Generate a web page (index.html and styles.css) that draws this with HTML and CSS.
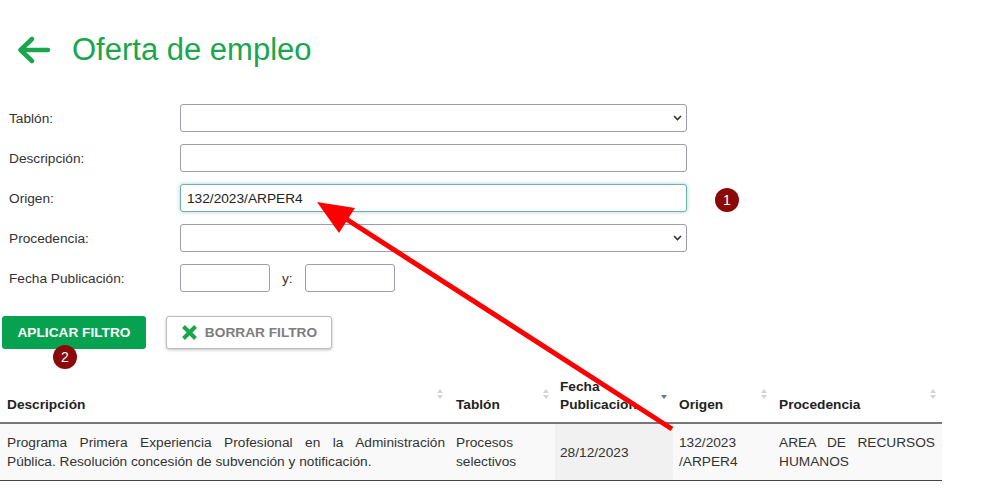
FILE: index.html
```html
<!DOCTYPE html>
<html lang="es">
<head>
  <meta charset="UTF-8" />
  <title>Oferta de empleo</title>
  <link rel="stylesheet" href="styles.css">
</head>
<body>

  <div class="pagina">
    <!-- Cabecera -->
    <header class="cabecera">
      <a class="volver" href="#" aria-label="Volver">
        <svg width="34" height="28" viewBox="0 0 34 28">
          <path d="M31 14 H4 M15 3 L3.5 14 L15 25" fill="none" stroke="#19a64d" stroke-width="4.5" stroke-linecap="round" stroke-linejoin="round"/>
        </svg>
      </a>
      <h1>Oferta de empleo</h1>
    </header>

    <!-- Filtros -->
    <form class="filtros">
      <label for="tablon">Tablón:</label>
      <select id="tablon"><option></option></select>

      <label for="descripcion">Descripción:</label>
      <input type="text" id="descripcion" />

      <label for="origen">Origen:</label>
      <input type="text" id="origen" class="enfocado" value="132/2023/ARPER4" />

      <label for="procedencia">Procedencia:</label>
      <select id="procedencia"><option></option></select>

      <label for="fechaDesde">Fecha Publicación:</label>
      <div class="rango">
        <input type="text" id="fechaDesde" />
        <span>y:</span>
        <input type="text" id="fechaHasta" />
      </div>
    </form>

    <div class="acciones">
      <button type="button" class="btn-aplicar">APLICAR FILTRO</button>
      <button type="button" class="btn-borrar">
        <svg width="17" height="17" viewBox="0 0 17 17">
          <path d="M2.5 2.5 L14.5 14.5 M14.5 2.5 L2.5 14.5" stroke="#19a64d" stroke-width="4"/>
        </svg>
        BORRAR FILTRO
      </button>
    </div>

    <!-- Resultados -->
    <table class="resultados">
      <colgroup>
        <col style="width: 449px">
        <col style="width: 106px">
        <col style="width: 118px">
        <col style="width: 100px">
        <col style="width: 169px">
      </colgroup>
      <thead>
        <tr>
          <th class="orden">Descripción</th>
          <th class="orden">Tablón</th>
          <th class="orden desc">Fecha Publicación</th>
          <th class="orden">Origen</th>
          <th class="orden">Procedencia</th>
        </tr>
      </thead>
      <tbody>
        <tr>
          <td class="justo">Programa Primera Experiencia Profesional en la Administración Pública. Resolución concesión de subvención y notificación.</td>
          <td>Procesos selectivos</td>
          <td class="ordenada">28/12/2023</td>
          <td>132/2023<wbr>/ARPER4</td>
          <td class="justo">AREA DE RECURSOS HUMANOS</td>
        </tr>
      </tbody>
    </table>

    <!-- Anotaciones -->
    <span class="paso paso-1">1</span>
    <span class="paso paso-2">2</span>
    <svg class="flecha" width="1000" height="501" viewBox="0 0 1000 501">
      <line x1="672" y1="429" x2="340" y2="215" stroke="#ff0000" stroke-width="5"/>
      <polygon points="317,202 355,208 339,233" fill="#ff0000"/>
    </svg>
  </div>

</body>
</html>
```

FILE: styles.css
```css
:root {
  --verde: #19a64d;
  --verde-boton: #07a24f;
  --texto: #333;
  --borde-campo: #9d99b6;
  --granate: #8a0a0a;
}

body {
  margin: 0;
  font-family: "Liberation Sans", Arial, sans-serif;
  font-size: 13.7px;
  color: var(--texto);
  background: #fff;
}

.pagina {
  position: relative;
  width: 1000px;
  height: 501px;
  overflow: hidden;
}

/* Cabecera */
.cabecera {
  display: flex;
  align-items: center;
  gap: 21px;
  padding: 32px 0 0 17px;
}

.volver {
  display: flex;
}

.cabecera h1 {
  margin: 0;
  font-size: 31px;
  line-height: 36px;
  font-weight: 400;
  color: var(--verde);
}

/* Filtros */
.filtros {
  display: grid;
  grid-template-columns: 180px 507px;
  grid-auto-rows: 28px;
  row-gap: 12px;
  margin-top: 36px;
}

.filtros label {
  align-self: center;
  padding-left: 9px;
}

.filtros input,
.filtros select {
  box-sizing: border-box;
  height: 28px;
  width: 100%;
  border: 1px solid var(--borde-campo);
  border-radius: 3px;
  background: #fff;
  font-family: inherit;
  font-size: 13.7px;
  color: #222;
  padding: 0 6px;
  margin: 0;
}

.filtros select {
  appearance: none;
  background-image: url("data:image/svg+xml,%3Csvg xmlns='http://www.w3.org/2000/svg' width='9' height='6' viewBox='0 0 9 6'%3E%3Cpath d='M1 1 L4.5 4.5 L8 1' fill='none' stroke='%23333' stroke-width='1.6'/%3E%3C/svg%3E");
  background-repeat: no-repeat;
  background-position: right 4px center;
}

.filtros input.enfocado {
  border-color: #6fb0ad;
  box-shadow: 0 0 4px rgba(95, 170, 165, 0.55);
  outline: none;
}

.rango {
  display: flex;
  align-items: center;
  gap: 12px;
}

.filtros .rango input {
  width: 90px;
}

/* Botones */
.acciones {
  display: flex;
  gap: 20px;
  padding-left: 2px;
  margin-top: 24px;
}

.acciones button {
  height: 33px;
  border-radius: 3px;
  font-family: inherit;
  font-size: 13.7px;
  font-weight: 700;
  cursor: pointer;
}

.btn-aplicar {
  width: 144px;
  border: none;
  background: var(--verde-boton);
  color: #fff;
}

.btn-borrar {
  width: 166px;
  display: flex;
  align-items: center;
  justify-content: center;
  gap: 7px;
  background: #fff;
  color: #7d7d7d;
  border: 1px solid #bdbdbd;
  box-shadow: 0 1px 3px rgba(0, 0, 0, 0.25);
}

/* Tabla */
.resultados {
  table-layout: fixed;
  border-collapse: collapse;
  width: 942px;
  margin-top: 25px;
}

.resultados th {
  position: relative;
  text-align: left;
  vertical-align: bottom;
  font-weight: 700;
  color: #222;
  line-height: 18px;
  padding: 4px 18px 8px 7px;
  border-bottom: 2px solid #777;
}

.resultados th:nth-child(3) {
  padding-left: 5px;
}

.resultados th:nth-child(4),
.resultados th:nth-child(5) {
  padding-left: 6px;
}

.resultados td {
  vertical-align: middle;
  line-height: 19px;
  padding: 9px 4px 9px 7px;
  background: #f9f9f9;
  border-bottom: 1px solid #444;
}

.resultados td:nth-child(4),
.resultados td:nth-child(5) {
  padding-left: 6px;
}

.resultados td.ordenada {
  background: #f1f1f1;
  padding-left: 5px;
}

.resultados td.justo {
  text-align: justify;
}

.resultados td:last-child {
  padding-right: 7px;
}

.orden::before,
.orden::after {
  content: "";
  position: absolute;
  right: 6px;
  border-left: 3.5px solid transparent;
  border-right: 3.5px solid transparent;
}

.orden::before {
  top: 15px;
  border-bottom: 4px solid #d4d4d4;
}

.orden::after {
  top: 21px;
  border-top: 4px solid #d4d4d4;
}

.orden.desc::before {
  display: none;
}

.orden.desc::after {
  top: 21px;
  border-top-color: #5a7aa5;
}

/* Anotaciones */
.paso {
  position: absolute;
  width: 24px;
  height: 24px;
  border-radius: 50%;
  background: var(--granate);
  color: #fff;
  font-size: 14px;
  line-height: 24px;
  text-align: center;
}

.paso-1 {
  left: 715px;
  top: 188px;
}

.paso-2 {
  left: 53px;
  top: 345px;
}

.flecha {
  position: absolute;
  top: 0;
  left: 0;
  pointer-events: none;
}
```
